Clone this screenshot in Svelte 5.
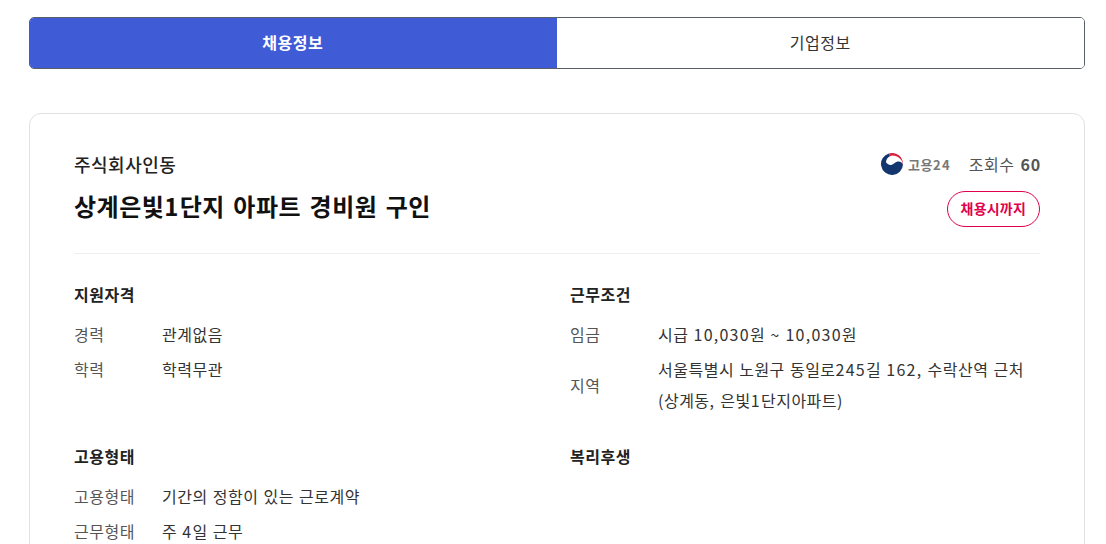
<script>
  const sections = [
    {
      title: "지원자격",
      rows: [
        ["경력", "관계없음"],
        ["학력", "학력무관"]
      ]
    },
    {
      title: "근무조건",
      rows: [
        ["임금", "시급 10,030원 ~ 10,030원"],
        ["지역", "서울특별시 노원구 동일로245길 162, 수락산역 근처\n(상계동, 은빛1단지아파트)"]
      ]
    },
    {
      title: "고용형태",
      rows: [
        ["고용형태", "기간의 정함이 있는 근로계약"],
        ["근무형태", "주 4일 근무"]
      ]
    },
    { title: "복리후생", rows: [] }
  ];

  // digits sit wider than the hangul around them
  const runs = (text) => text.split(/([0-9,~]+)/);
</script>

<main>
  <div class="tabs">
    <button class="tab active">채용정보</button>
    <button class="tab">기업정보</button>
  </div>

  <section class="card">
    <header>
      <div class="head-left">
        <p class="company">주식회사인동</p>
        <h1>상계은빛<span class="num">1</span>단지 아파트 경비원 구인</h1>
      </div>
      <div class="head-right">
        <div class="meta">
          <span class="source">
            <svg width="22" height="22" viewBox="0 0 22 22">
              <circle cx="11" cy="11" r="11" fill="#fff" />
              <path d="M8 .4A11 11 0 1 0 22 11.500C21.600 9.600 19.300 8 16.500 8.500 13.800 9 12.800 11.500 10.200 12 7.800 12.400 6.200 10.700 5 9.300 5 6.800 6.500 4.500 9 3.300Z" fill="#14366f" />
              <path d="M8 .4A11 11 0 0 1 22 11.500C21.400 6.800 16.800 2.600 11.500 2.600 10.800 2.600 9.800 2.800 9 3.300Z" fill="#d9213f" />
            </svg>
            <span class="source-name">고용<span class="source-num">24</span></span>
          </span>
          <span class="views">조회수 <b>60</b></span>
        </div>
        <span class="badge">채용시까지</span>
      </div>
    </header>

    <div class="grid">
      {#each sections as s}
        <div class="block">
          <h2>{s.title}</h2>
          {#each s.rows as [k, v]}
            <div class="row">
              <span class="key">{k}</span>
              <div class="val">
                {#each v.split("\n") as line}
                  <div>{#each runs(line) as part, i}{#if i % 2}<span class="num">{part}</span>{:else}{part}{/if}{/each}</div>
                {/each}
              </div>
            </div>
          {/each}
        </div>
      {/each}
    </div>
  </section>
</main>

<style>
  :global(body) {
    margin: 0;
    background: #fff;
    overflow: hidden;
  }

  main {
    height: 544px;
    overflow: hidden;
    padding: 17px 21px 0 29px;
    font-family: "Noto Sans CJK KR", "Noto Sans", sans-serif;
    color: #222;
    letter-spacing: 0.5px;
    word-spacing: 1px;
  }

  .tabs {
    display: flex;
    height: 52px;
    border: 1px solid #5a5f66;
    border-radius: 5px;
    overflow: hidden;
    box-sizing: border-box;
  }

  .tab {
    flex: 1;
    border: none;
    background: #fff;
    font: inherit;
    font-size: 16px;
    letter-spacing: inherit;
    color: #333;
    padding: 0 0 2px;
  }

  .tab.active {
    background: #3f5bd6;
    color: #fff;
    font-weight: 700;
    margin: -1px 0 -1px -1px;
  }

  .card {
    margin-top: 44px;
    border: 1px solid #e2e2e2;
    border-radius: 12px;
    padding: 36px 44px 40px;
  }

  header {
    display: flex;
    justify-content: space-between;
    padding-bottom: 26px;
    border-bottom: 1px solid #eee;
  }

  .company {
    margin: 0;
    font-size: 18px;
    line-height: 28px;
    font-weight: 500;
    color: #222;
  }

  h1 {
    margin: 10px 0 0;
    font-size: 24px;
    line-height: 36px;
    font-weight: 700;
    color: #111;
    word-spacing: 2.500px;
  }

  .head-right {
    display: flex;
    flex-direction: column;
    align-items: flex-end;
  }

  .meta {
    display: flex;
    align-items: center;
    height: 28px;
    gap: 18px;
  }

  .source {
    display: flex;
    align-items: center;
    gap: 5px;
  }

  .source-name {
    font-size: 13px;
    font-weight: 700;
    color: #777;
    letter-spacing: 0.5px;
  }

  .source-num {
    letter-spacing: 1.2px;
  }

  .views {
    font-size: 16px;
    color: #555;
    margin-right: -1px;
  }

  .views b {
    font-weight: 700;
    letter-spacing: 0.8px;
    margin-left: 1px;
  }

  .badge {
    margin-top: 13px;
    box-sizing: border-box;
    height: 36px;
    line-height: 33px;
    padding: 0 13px;
    border: 1px solid #e0004d;
    border-radius: 18px;
    font-size: 14px;
    font-weight: 700;
    color: #e0004d;
    letter-spacing: 0.2px;
  }

  .grid {
    display: grid;
    grid-template-columns: 470px 470px;
    column-gap: 26px;
    row-gap: 25px;
    padding-top: 27px;
  }

  h2 {
    margin: 0 0 10px;
    font-size: 16px;
    line-height: 26px;
    font-weight: 700;
    color: #222;
  }

  .row {
    display: flex;
    align-items: center;
    padding: 2px 0;
    font-size: 16px;
    line-height: 31px;
  }

  .key {
    flex: 0 0 88px;
    color: #555;
  }

  .val {
    color: #333;
  }

  .num {
    letter-spacing: 1.25px;
  }
</style>
